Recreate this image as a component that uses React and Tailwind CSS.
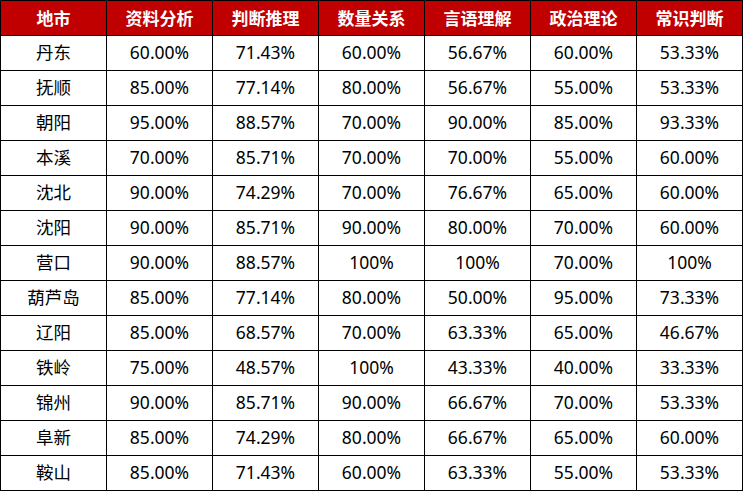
import React from "react";

const headers = ["地市", "资料分析", "判断推理", "数量关系", "言语理解", "政治理论", "常识判断"];
const rows = [
  ["丹东", "60.00%", "71.43%", "60.00%", "56.67%", "60.00%", "53.33%"],
  ["抚顺", "85.00%", "77.14%", "80.00%", "56.67%", "55.00%", "53.33%"],
  ["朝阳", "95.00%", "88.57%", "70.00%", "90.00%", "85.00%", "93.33%"],
  ["本溪", "70.00%", "85.71%", "70.00%", "70.00%", "55.00%", "60.00%"],
  ["沈北", "90.00%", "74.29%", "70.00%", "76.67%", "65.00%", "60.00%"],
  ["沈阳", "90.00%", "85.71%", "90.00%", "80.00%", "70.00%", "60.00%"],
  ["营口", "90.00%", "88.57%", "100%", "100%", "70.00%", "100%"],
  ["葫芦岛", "85.00%", "77.14%", "80.00%", "50.00%", "95.00%", "73.33%"],
  ["辽阳", "85.00%", "68.57%", "70.00%", "63.33%", "65.00%", "46.67%"],
  ["铁岭", "75.00%", "48.57%", "100%", "43.33%", "40.00%", "33.33%"],
  ["锦州", "90.00%", "85.71%", "90.00%", "66.67%", "70.00%", "53.33%"],
  ["阜新", "85.00%", "74.29%", "80.00%", "66.67%", "65.00%", "60.00%"],
  ["鞍山", "85.00%", "71.43%", "60.00%", "63.33%", "55.00%", "53.33%"],
];

export default function App() {
  return (
    <div className="w-[743px] h-[491px] bg-white">
      <div
        className="grid grid-cols-[repeat(7,105px)] auto-rows-[34px] gap-px bg-black p-px w-[743px] text-[17.5px] leading-none"
        style={{ fontFamily: '"Noto Sans", "Noto Sans CJK SC", sans-serif' }}
      >
        {headers.map((h) => (
          <div key={h} className="bg-[#c00000] text-white font-bold text-[17px] flex items-center justify-center">
            {h}
          </div>
        ))}
        {rows.map((r) =>
          r.map((c, i) => (
            <div key={r[0] + i} className="bg-white text-black flex items-center justify-center">
              {c}
            </div>
          ))
        )}
      </div>
    </div>
  );
}
